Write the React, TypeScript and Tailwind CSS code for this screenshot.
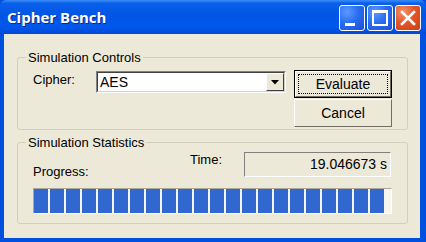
export default function App() {
  const blocks = Array.from({ length: 22 });
  return (
    <div className="w-[426px] h-[242px] flex flex-col bg-[#0050E0] font-['Liberation_Sans',Arial,sans-serif] text-[13px] leading-[15px] text-black">
      {/* Title bar */}
      <div className="h-[34px] flex items-center pl-[7px] pr-[5px] rounded-t-[6px] bg-[linear-gradient(to_bottom,#3A8CF8_0%,#0A5FEA_10%,#0055E5_45%,#0058EC_80%,#0047D6_100%)]">
        <span className="flex-1 text-white font-bold text-[15px] font-['Open_Sans','DejaVu_Sans',sans-serif] [text-shadow:1px_1px_0_#0B2A8A]">
          Cipher Bench
        </span>
        <div className="flex gap-[2px] pt-[2px]">
          {/* minimize */}
          <div className="w-[26px] h-[26px] rounded-[3px] border border-white bg-[radial-gradient(circle_at_30%_25%,#5C9BFF_0%,#2A6DF0_45%,#1A4FD8_100%)] flex items-end pl-[5px] pb-[4px]">
            <div className="w-[10px] h-[3px] bg-white" />
          </div>
          {/* maximize */}
          <div className="w-[26px] h-[26px] rounded-[3px] border border-white bg-[radial-gradient(circle_at_30%_25%,#5C9BFF_0%,#2A6DF0_45%,#1A4FD8_100%)] flex items-center justify-center">
            <div className="w-[16px] h-[16px] border-2 border-t-[3px] border-white" />
          </div>
          {/* close */}
          <div className="w-[26px] h-[26px] rounded-[3px] border border-white bg-[radial-gradient(circle_at_30%_25%,#F4946C_0%,#E3562B_45%,#CC3F16_100%)] flex items-center justify-center">
            <svg width="16" height="16" viewBox="0 0 16 16">
              <path d="M2 2 L14 14 M14 2 L2 14" stroke="white" strokeWidth="2.6" strokeLinecap="square" />
            </svg>
          </div>
        </div>
      </div>

      {/* Frame + client */}
      <div className="flex-1 flex pl-[4px] pr-[6px] pb-[4px]">
        <div className="flex-1 bg-[#ECE9D8] pl-[13px] pr-[12px] pt-[16px] flex flex-col">
          {/* Simulation Controls */}
          <fieldset className="border border-[#D0D0BF] rounded-[3px] pl-[15px] pr-[15px] pb-[2px]">
            <legend className="ml-[-7px] px-[2px] leading-[15px]">Simulation Controls</legend>
            <div className="flex items-start justify-between">
              <div className="flex items-start pt-[6px]">
                <span className="w-[63px] pt-[1px]">Cipher:</span>
                <div className="w-[190px] h-[22px] flex border-t border-l border-[#808080] border-b border-r border-b-white border-r-white">
                  <div className="flex-1 flex border-t border-l border-[#404040] border-b border-r border-b-[#D4D0C8] border-r-[#D4D0C8] bg-white">
                    <span className="flex-1 pl-[2px] pt-[2px] text-[14px]">AES</span>
                    <div className="w-[18px] h-full bg-[#ECE9D8] border-t border-l border-white border-b border-r border-b-[#404040] border-r-[#404040] flex items-center justify-center">
                      <svg width="8" height="5" viewBox="0 0 8 5">
                        <path d="M0 0 H8 L4 4.5 Z" fill="black" />
                      </svg>
                    </div>
                  </div>
                </div>
              </div>
              <div className="flex flex-col gap-[1px] pt-[5px]">
                <div className="w-[98px] h-[28px] border border-black">
                  <div className="w-full h-full border-t border-l border-white border-b border-r border-b-[#716F64] border-r-[#716F64] bg-[#ECE9D8] p-[2px]">
                    <div className="w-full h-full border border-dotted border-black flex items-center justify-center text-[14px]">
                      Evaluate
                    </div>
                  </div>
                </div>
                <div className="w-[98px] h-[28px] border-t border-l border-white border-b border-r border-b-[#716F64] border-r-[#716F64] bg-[#ECE9D8] flex items-center justify-center text-[14px]">
                  Cancel
                </div>
              </div>
            </div>
          </fieldset>

          {/* Simulation Statistics */}
          <fieldset className="mt-[5px] border border-[#D0D0BF] rounded-[3px] pl-[15px] pr-[15px] pb-[9px]">
            <legend className="ml-[-7px] px-[2px] leading-[15px]">Simulation Statistics</legend>
            <div className="flex items-start">
              <span className="w-[157px] pt-[14px]">Progress:</span>
              <span className="w-[54px] pt-[2px]">Time:</span>
              <div className="w-[147px] h-[25px] mt-[2px] border-t border-l border-[#808080] border-b border-r border-b-white border-r-white flex items-center justify-end pr-[3px] text-[14px]">
                19.046673 s
              </div>
            </div>
            <div className="mt-[9px] w-[359px] h-[26px] border-t border-l border-[#ACA899] border-b border-r border-b-white border-r-white bg-[#F6F5F0] flex gap-[2px]">
              {blocks.map((_, i) => (
                <div key={i} className="w-[14px] h-full bg-[#3168D0]" />
              ))}
            </div>
          </fieldset>
        </div>
      </div>
    </div>
  );
}
